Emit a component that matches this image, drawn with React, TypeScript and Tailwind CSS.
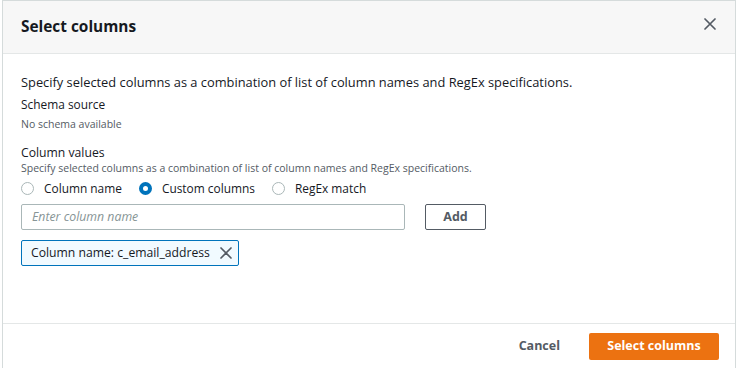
const font = { fontFamily: '"Open Sans", "Liberation Sans", sans-serif' };

function Cross({ className }: { className?: string }) {
  return (
    <svg viewBox="0 0 12 12" className={className} fill="none" stroke="currentColor" strokeWidth={1.7} strokeLinecap="round">
      <path d="M1 1L11 11M11 1L1 11" />
    </svg>
  );
}

function Radio({ label, checked }: { label: string; checked?: boolean }) {
  return (
    <label className="flex items-center gap-[10px]">
      {checked ? (
        <span className="box-border h-[13px] w-[13px] rounded-full border-[4px] border-[#0073bb] bg-white" />
      ) : (
        <span className="box-border h-[13px] w-[13px] rounded-full border border-[#aab7b8] bg-white" />
      )}
      <span className="text-[11.9px] text-[#16191f]">{label}</span>
    </label>
  );
}

export default function App() {
  return (
    <div className="h-[368px] w-[738px] bg-white pl-[2px] pr-[2px]" style={font}>
      <div className="flex h-[368px] flex-col border-x border-t border-[#d5dbdb] bg-white">
        <div className="flex h-[53px] shrink-0 items-center justify-between border-b border-[#e4e7e7] bg-[#f7f7f7] pl-[18px] pr-[19px]">
          <h2 className="text-[15.4px] font-bold text-[#16191f]">Select columns</h2>
          <Cross className="mb-[7px] h-[12px] w-[12px] text-[#545b64]" />
        </div>

        <div className="flex flex-1 flex-col px-[18px] pt-[19px]">
          <p className="text-[12.85px] leading-[18px] text-[#16191f]">
            Specify selected columns as a combination of list of column names and RegEx specifications.
          </p>
          <p className="mt-[4px] text-[11.9px] leading-[18px] text-[#16191f]">Schema source</p>
          <p className="mt-[3px] text-[10.5px] leading-[16px] text-[#545b64]">No schema available</p>

          <p className="mt-[12px] text-[12.2px] leading-[18px] text-[#16191f]">Column values</p>
          <p className="text-[10.5px] leading-[13px] text-[#545b64]">
            Specify selected columns as a combination of list of column names and RegEx specifications.
          </p>
          <div className="mt-[5px] flex h-[18px] items-center gap-[17px]">
            <Radio label="Column name" />
            <Radio label="Custom columns" checked />
            <Radio label="RegEx match" />
          </div>

          <div className="mt-[6px] flex items-center gap-[20px]">
            <div className="flex h-[26px] w-[384px] items-center rounded-[2px] border border-[#aab7b8] px-[10px]">
              <span className="text-[12.3px] italic text-[#879596]">Enter column name</span>
            </div>
            <button className="flex h-[26px] w-[61px] items-center justify-center rounded-[2px] border border-[#545b64] bg-white text-[12.5px] font-bold text-[#545b64]">
              Add
            </button>
          </div>

          <div className="mt-[10px] flex">
            <div className="flex h-[26px] items-center gap-[10px] rounded-[2px] border border-[#0073bb] bg-[#f1faff] pl-[9px] pr-[6px]">
              <span className="text-[12.2px] text-[#16191f]">Column name: c_email_address</span>
              <Cross className="h-[12px] w-[12px] text-[#545b64]" />
            </div>
          </div>
        </div>

        <div className="flex h-[45px] shrink-0 items-center justify-end gap-[29px] border-t border-[#e4e7e7] pr-[16px]">
          <span className="text-[12.5px] font-bold text-[#545b64]">Cancel</span>
          <button className="h-[27px] w-[130px] rounded-[2px] bg-[#ec7211] text-[12.5px] font-bold text-white">
            Select columns
          </button>
        </div>
      </div>
    </div>
  );
}
